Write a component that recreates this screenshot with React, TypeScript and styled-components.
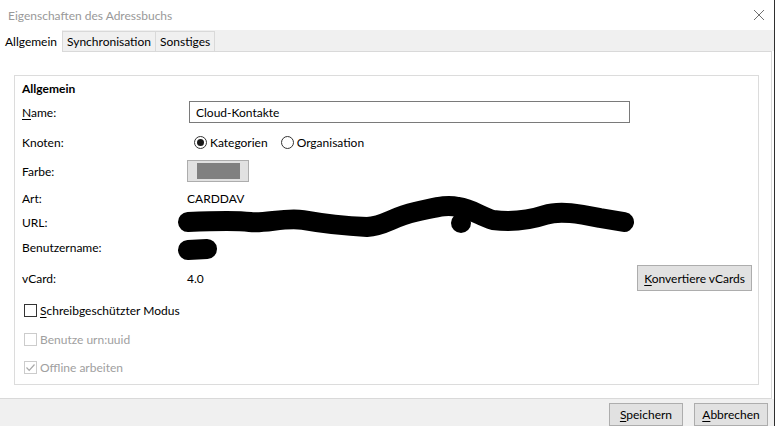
import React from 'react'
import styled, { createGlobalStyle } from 'styled-components'

const GlobalStyle = createGlobalStyle`
  * { box-sizing: border-box; }
  body {
    margin: 0;
    font-family: Lato, "Noto Sans", sans-serif;
    font-size: 12px;
    color: #000;
    background: #fff;
  }
`

const Window = styled.div`
  width: 775px;
  height: 426px;
  display: flex;
  flex-direction: column;
  border-right: 1px solid #2f2f2f;
  background: #fff;
  overflow: hidden;
`

const TitleBar = styled.div`
  height: 30px;
  flex-shrink: 0;
  display: flex;
  align-items: center;
  justify-content: space-between;
  padding: 0 9px 0 8px;
`

const Title = styled.span`
  color: #999;
  font-size: 12px;
`

const TabStrip = styled.div`
  height: 21px;
  flex-shrink: 0;
  display: flex;
  align-items: flex-end;
  background: #f0f0f0;
  position: relative;
  z-index: 1;
`

const Tab = styled.div<{ $active?: boolean }>`
  height: ${({ $active }) => ($active ? '22px' : '20px')};
  margin-bottom: ${({ $active }) => ($active ? '-1px' : '0')};
  padding: ${({ $active }) => ($active ? '0 5px' : '0 4px')};
  display: flex;
  align-items: center;
  background: ${({ $active }) => ($active ? '#fff' : '#f0f0f0')};
  border: 1px solid #d9d9d9;
  border-left: ${({ $active }) => ($active ? 'none' : '1px solid #d9d9d9')};
  border-bottom: none;
  border-top-color: ${({ $active }) => ($active ? '#fff' : '#d9d9d9')};
  margin-left: ${({ $active }) => ($active ? '0' : '-1px')};
  white-space: nowrap;
`

const Panel = styled.div`
  flex: 1;
  display: flex;
  margin-right: 2px;
  padding: 23px 12px 13px 14px;
  border: 1px solid #d9d9d9;
  border-left: none;
  background: #fff;
`

const GroupBox = styled.div`
  flex: 1;
  display: flex;
  flex-direction: column;
  border: 1px solid #dcdcdc;
  padding: 0 6px 0 7px;
`

const GroupTitle = styled.div`
  margin-top: 4px;
  height: 18px;
  line-height: 18px;
  font-weight: 700;
`

const Row = styled.div<{ $top: number; $h: number }>`
  margin-top: ${({ $top }) => $top}px;
  height: ${({ $h }) => $h}px;
  display: flex;
  align-items: center;
`

const Label = styled.div`
  width: 165px;
  flex-shrink: 0;
`

const Value = styled.div`
  flex: 1;
  display: flex;
  align-items: center;
`

const Spacer = styled.div`
  flex: 1;
`

const Mnemonic = styled.span`
  text-decoration: underline;
  text-underline-offset: 2px;
`

const TextInput = styled.input`
  margin-left: 2px;
  width: 441px;
  height: 22px;
  border: 1px solid #7a7a7a;
  padding: 0 6px;
  font: inherit;
  color: #000;
  outline: none;
`

const RadioGroup = styled.div`
  margin-left: 7px;
  display: flex;
  align-items: center;
  gap: 13px;
`

const RadioOption = styled.label`
  display: flex;
  align-items: center;
  gap: 3px;
`

const RadioCircle = styled.span<{ $checked?: boolean }>`
  width: 13px;
  height: 13px;
  border-radius: 50%;
  border: 1px solid #333;
  display: flex;
  align-items: center;
  justify-content: center;

  &::after {
    content: '';
    width: 7px;
    height: 7px;
    border-radius: 50%;
    background: ${({ $checked }) => ($checked ? '#1a1a1a' : 'transparent')};
  }
`

const ColorButton = styled.div`
  width: 62px;
  height: 22px;
  background: #e1e1e1;
  border: 1px solid #adadad;
  display: flex;
  align-items: center;
  justify-content: center;
`

const Swatch = styled.span<{ $color: string }>`
  width: 43px;
  height: 16px;
  background: ${({ $color }) => $color};
`

const Redaction = styled.svg`
  display: block;
  flex-shrink: 0;
  margin-left: -17px;
  overflow: visible;
`

const Button = styled.div<{ $w?: number; $h: number }>`
  ${({ $w }) => ($w ? `width: ${$w}px;` : '')}
  height: ${({ $h }) => $h}px;
  padding: 0 6px;
  display: flex;
  align-items: center;
  justify-content: center;
  background: #e1e1e1;
  border: 1px solid #adadad;
  white-space: nowrap;
`

const CheckRow = styled.label<{ $disabled?: boolean }>`
  margin-left: 2px;
  display: flex;
  align-items: center;
  gap: 3px;
  color: ${({ $disabled }) => ($disabled ? '#a0a0a0' : '#000')};
`

const CheckBox = styled.span<{ $disabled?: boolean }>`
  width: 13px;
  height: 13px;
  border: 1px solid ${({ $disabled }) => ($disabled ? '#cccccc' : '#333333')};
  display: flex;
  align-items: center;
  justify-content: center;
`

const Footer = styled.div`
  height: 27px;
  flex-shrink: 0;
  background: #f0f0f0;
  display: flex;
  justify-content: flex-end;
  gap: 11px;
  padding: 4px 6px 0 0;
`

export default function App() {
  return (
    <>
      <GlobalStyle />
      <Window>
        <TitleBar>
          <Title>Eigenschaften des Adressbuchs</Title>
          <svg width="12" height="12" viewBox="0 0 12 12">
            <path d="M1 1 L11 11 M11 1 L1 11" stroke="#707070" strokeWidth="1" fill="none" />
          </svg>
        </TitleBar>

        <TabStrip>
          <Tab $active>Allgemein</Tab>
          <Tab>Synchronisation</Tab>
          <Tab>Sonstiges</Tab>
        </TabStrip>

        <Panel>
          <GroupBox>
            <GroupTitle>Allgemein</GroupTitle>

            <Row $top={3} $h={22}>
              <Label><Mnemonic>N</Mnemonic>ame:</Label>
              <Value>
                <TextInput defaultValue="Cloud-Kontakte" />
              </Value>
            </Row>

            <Row $top={8} $h={22}>
              <Label>Knoten:</Label>
              <Value>
                <RadioGroup>
                  <RadioOption><RadioCircle $checked />Kategorien</RadioOption>
                  <RadioOption><RadioCircle />Organisation</RadioOption>
                </RadioGroup>
              </Value>
            </Row>

            <Row $top={7} $h={22}>
              <Label>Farbe:</Label>
              <Value>
                <ColorButton><Swatch $color="#808080" /></ColorButton>
              </Value>
            </Row>

            <Row $top={6} $h={20}>
              <Label>Art:</Label>
              <Value>CARDDAV</Value>
            </Row>

            <Row $top={4} $h={20}>
              <Label>URL:</Label>
              <Value>
                {/* scribbled-out address */}
                <Redaction width="470" height="40" viewBox="170 202 470 40">
                  <path
                    d="M188 222 C210 221 235 220 250 222 C265 224 285 217 303 220 C320 223 345 226 367 227 C385 226 392 217 415 212 C435 208 445 204 458 207 C472 209 480 216 493 220 C510 222 530 220 545 215 C560 210 580 214 600 218 L624 222"
                    stroke="#000"
                    strokeWidth="20"
                    strokeLinecap="round"
                    strokeLinejoin="round"
                    fill="none"
                  />
                  <circle cx="461" cy="223" r="10" fill="#000" />
                </Redaction>
              </Value>
            </Row>

            <Row $top={5} $h={20}>
              <Label>Benutzername:</Label>
              <Value>
                <Redaction width="60" height="40" viewBox="170 227 60 40">
                  <path d="M188 250 L207 249" stroke="#000" strokeWidth="20" strokeLinecap="round" fill="none" />
                </Redaction>
              </Value>
            </Row>

            <Row $top={8} $h={26}>
              <Label>vCard:</Label>
              <Value>
                4.0
                <Spacer />
                <Button $h={26}><span><Mnemonic>K</Mnemonic>onvertiere vCards</span></Button>
              </Value>
            </Row>

            <Row $top={9} $h={20}>
              <CheckRow>
                <CheckBox />
                <span><Mnemonic>S</Mnemonic>chreibgeschützter Modus</span>
              </CheckRow>
            </Row>

            <Row $top={9} $h={20}>
              <CheckRow $disabled>
                <CheckBox $disabled />
                <span>Benutze urn:uuid</span>
              </CheckRow>
            </Row>

            <Row $top={8} $h={20}>
              <CheckRow $disabled>
                <CheckBox $disabled>
                  <svg width="11" height="11" viewBox="0 0 11 11">
                    <path d="M1.5 5.5 L4.2 8.3 L9.5 2.5" stroke="#a8a8a8" strokeWidth="1.2" fill="none" />
                  </svg>
                </CheckBox>
                <span>Offline arbeiten</span>
              </CheckRow>
            </Row>
          </GroupBox>
        </Panel>

        <Footer>
          <Button $w={74} $h={23}><span><Mnemonic>S</Mnemonic>peichern</span></Button>
          <Button $w={74} $h={23}><span><Mnemonic>A</Mnemonic>bbrechen</span></Button>
        </Footer>
      </Window>
    </>
  )
}
